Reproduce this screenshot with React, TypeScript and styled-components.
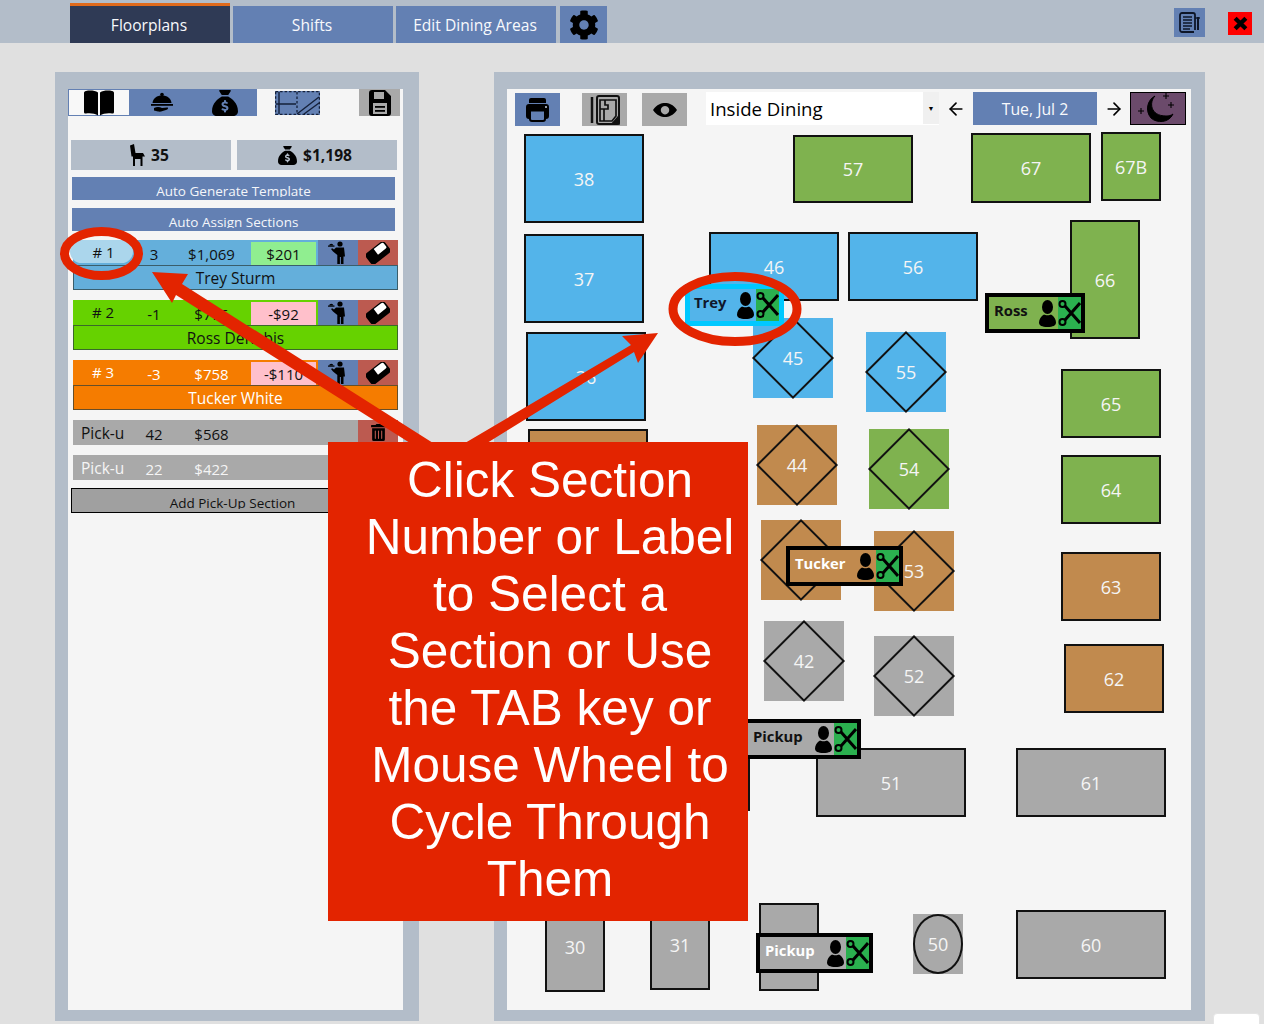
import React from "react";
import styled, { createGlobalStyle } from "styled-components";
import { ArrowLeft, ArrowRight } from "lucide-react";
import { FaSackDollar } from "react-icons/fa6";
import { FaCog as FaGear, FaTrashAlt as FaBin } from "react-icons/fa";

const FONT = `"Open Sans", "Noto Sans", sans-serif`;
const BLUE = "#6380b3";
const STEEL = "#b3bdc9";
const GRAY = "#a9a9a9";

const Global = createGlobalStyle`
  html, body { margin: 0; padding: 0; background: #e0e0e0; }
  body { font-family: ${FONT}; }
`;

const Page = styled.div`
  position: relative;
  width: 1264px;
  height: 1024px;
  overflow: hidden;
  background: #e0e0e0;
`;

const TopBar = styled.header`
  height: 43px;
  background: ${STEEL};
  display: flex;
  align-items: flex-end;
  padding: 0 12px 0 70px;
  box-sizing: border-box;
`;
const Tab = styled.div<{ $w: number; $active?: boolean }>`
  width: ${(p) => p.$w}px;
  height: ${(p) => (p.$active ? 40 : 37)}px;
  margin-right: 3px;
  padding-right: 2px;
  box-sizing: border-box;
  background: ${(p) => (p.$active ? "#2f3a55" : BLUE)};
  border-top: ${(p) => (p.$active ? "3px solid #e06a1c" : "none")};
  color: #f8f9fc;
  font-size: 15.6px;
  display: flex;
  align-items: center;
  justify-content: center;
`;
const GearTab = styled(Tab)`
  margin-left: 1px;
  padding-right: 0;
  color: #000;
  font-size: 30px;
`;
const TopRight = styled.div`
  margin-left: auto;
  align-self: stretch;
  display: flex;
  gap: 23px;
  align-items: flex-start;
`;
const NotesButton = styled.div`
  width: 31px;
  height: 29px;
  margin-top: 8px;
  background: ${BLUE};
  display: flex;
  align-items: center;
  justify-content: center;
`;
const CloseButton = styled.div`
  width: 24px;
  height: 23px;
  margin-top: 12px;
  background: #fe0000;
  display: flex;
  align-items: center;
  justify-content: center;
`;

const Main = styled.main`
  display: flex;
  gap: 75px;
  padding: 29px 0 0 55px;
`;
const Panel = styled.section<{ $w: number; $right: number }>`
  width: ${(p) => p.$w}px;
  height: 949px;
  box-sizing: border-box;
  background: #f5f5f5;
  border: solid ${STEEL};
  border-width: 17px ${(p) => p.$right}px 11px 13px;
`;

/* left panel */
const SideTools = styled.div`
  display: flex;
  height: 28px;
  align-items: flex-start;
`;
const SideTool = styled.div<{ $w: number; $bg?: string; $ml?: number; $selected?: boolean }>`
  width: ${(p) => p.$w}px;
  height: 27px;
  margin-left: ${(p) => p.$ml ?? 0}px;
  box-sizing: border-box;
  background: ${(p) => p.$bg ?? "transparent"};
  border: ${(p) => (p.$selected ? `1px solid ${BLUE}` : "none")};
  display: flex;
  align-items: center;
  justify-content: center;
`;
const SideBody = styled.div`
  padding: 23px 0 0 3px;
  display: flex;
  flex-direction: column;
`;
const Stats = styled.div`
  display: flex;
  gap: 6px;
  margin-bottom: 7px;
`;
const Stat = styled.div`
  width: 160px;
  height: 30px;
  padding-right: 4px;
  box-sizing: border-box;
  background: ${STEEL};
  display: flex;
  align-items: center;
  justify-content: center;
  gap: 6px;
  font-weight: 700;
  font-size: 15.6px;
  color: #111;
`;
const AutoButton = styled.div`
  width: 323px;
  height: 23px;
  margin: 0 0 8px 1px;
  background: ${BLUE};
  color: #f4f6fa;
  font-size: 13.5px;
  text-align: center;
`;
const ClippedLabel = styled.div`
  height: 20px;
  line-height: 29px;
  overflow: hidden;
`;
const SectionList = styled.div`
  padding-top: 1px;
`;
const Section = styled.div<{ $fg: string }>`
  width: 325px;
  margin: 0 0 10px 2px;
  color: ${(p) => p.$fg};
`;
const SectionRow = styled.div<{ $bg: string }>`
  height: 25px;
  display: grid;
  grid-template-columns: 60px 42px 73px 70px 40px 40px;
  background: ${(p) => p.$bg};
  font-size: 15px;
`;
const Cell = styled.div`
  display: flex;
  align-items: center;
  justify-content: center;
  padding-top: 2px;
`;
const NumberCell = styled.div<{ $selected?: boolean }>`
  display: flex;
  align-items: center;
  justify-content: center;
  font-size: 15px;
  ${(p) =>
    p.$selected
      ? `background:#abd6ec; border-radius:12px; margin:0 0 2px -3px; padding-left:4px;`
      : `padding-bottom:2px;`}
`;
const DiffCell = styled(Cell)<{ $bg: string }>`
  background: ${(p) => p.$bg};
  margin: 2px 2px 0 3px;
  color: #111;
  padding-top: 0;
`;
const ActionCell = styled.div<{ $bg: string }>`
  background: ${(p) => p.$bg};
  display: flex;
  align-items: center;
  justify-content: center;
  color: #000;
`;
const NameRow = styled.div<{ $bg: string }>`
  height: 25px;
  box-sizing: border-box;
  background: ${(p) => p.$bg};
  border: 1px solid rgba(40, 60, 60, 0.7);
  font-size: 15.5px;
  font-weight: 500;
  display: flex;
  align-items: center;
  justify-content: center;
`;
const PickRow = styled.div<{ $light?: boolean }>`
  width: 325px;
  height: 25px;
  margin: 0 0 10px 2px;
  background: ${GRAY};
  color: ${(p) => (p.$light ? "#f5f5f5" : "#111")};
  display: grid;
  grid-template-columns: 60px 42px 73px 110px 40px;
  font-size: 15px;
`;
const PickLabel = styled.div`
  padding-left: 8px;
  display: flex;
  align-items: center;
  font-size: 15.5px;
  overflow: hidden;
`;
const AddButton = styled.div`
  width: 323px;
  height: 25px;
  margin-top: -2px;
  box-sizing: border-box;
  border: 1px solid #000;
  background: #a0a0a0;
  color: #111;
  font-size: 13.5px;
  text-align: center;
`;

/* right panel */
const FloorTools = styled.div`
  display: flex;
  align-items: flex-start;
  height: 46px;
  padding: 3px 0 0 8px;
  box-sizing: border-box;
`;
const IconTool = styled.div<{ $bg: string; $ml: number }>`
  width: 45px;
  height: 33px;
  margin: 1px 0 0 ${(p) => p.$ml}px;
  background: ${(p) => p.$bg};
  display: flex;
  align-items: center;
  justify-content: center;
`;
const AreaSelect = styled.div`
  width: 233px;
  height: 33px;
  margin-left: 19px;
  background: #fff;
  display: flex;
  color: #000;
  font-size: 18.6px;
`;
const AreaText = styled.div`
  flex: 1;
  padding-left: 4px;
  line-height: 33px;
`;
const AreaCaret = styled.div`
  width: 16px;
  height: 32px;
  background: #f0f0f0;
  display: flex;
  align-items: center;
  justify-content: center;
  font-size: 7px;
`;
const NavArrow = styled.div<{ $w: number }>`
  width: ${(p) => p.$w}px;
  height: 33px;
  display: flex;
  align-items: center;
  justify-content: center;
  color: #000;
`;
const DateButton = styled.div`
  width: 124px;
  height: 33px;
  background: ${BLUE};
  color: #f8f9fc;
  font-size: 15.8px;
  display: flex;
  align-items: center;
  justify-content: center;
`;
const MoonButton = styled.div`
  width: 56px;
  height: 33px;
  box-sizing: border-box;
  background: #6b4a6b;
  border: 1px solid #000;
  display: flex;
  align-items: center;
  justify-content: center;
`;

const Canvas = styled.div`
  position: relative;
  height: 875px;
`;
const RectTable = styled.div<{ $x: number; $y: number; $w: number; $h: number; $c: string }>`
  position: absolute;
  left: ${(p) => p.$x - 507}px;
  top: ${(p) => p.$y - 135}px;
  width: ${(p) => p.$w}px;
  height: ${(p) => p.$h}px;
  box-sizing: border-box;
  background: ${(p) => p.$c};
  border: 2px solid #111;
  color: #f5f5f5;
  font-size: 18px;
  display: flex;
  align-items: center;
  justify-content: center;
`;
const SquareTable = styled(RectTable)`
  border: none;
  padding-bottom: 1px;
`;
const DiamondFrame = styled.div`
  position: absolute;
  left: 11px;
  top: 11px;
  width: 58px;
  height: 58px;
  box-sizing: border-box;
  border: 2px solid #111;
  transform: rotate(45deg);
`;
const EllipseFrame = styled.div`
  position: absolute;
  inset: 0;
  box-sizing: border-box;
  border: 2px solid #111;
  border-radius: 50%;
`;
const TableLabel = styled.span`
  position: relative;
`;
const Badge = styled.div<{ $x: number; $y: number; $w: number; $h: number; $b: number; $c: string; $frame: string; $fg: string }>`
  position: absolute;
  left: ${(p) => p.$x - 507}px;
  top: ${(p) => p.$y - 135}px;
  width: ${(p) => p.$w}px;
  height: ${(p) => p.$h}px;
  box-sizing: border-box;
  background: ${(p) => p.$c};
  border: ${(p) => p.$b}px solid ${(p) => p.$frame};
  color: ${(p) => p.$fg};
  display: flex;
  align-items: stretch;
  padding-left: ${(p) => 9 - p.$b}px;
  font-weight: 700;
  font-size: 14.8px;
`;
const BadgeName = styled.div`
  flex: 1;
  line-height: 26px;
`;
const BadgePerson = styled.div`
  width: 20px;
  margin-right: 1px;
  display: flex;
  align-items: center;
  justify-content: center;
  color: #000;
`;
const BadgeCut = styled.div`
  width: 23px;
  background: #2bb04f;
  display: flex;
  align-items: center;
  justify-content: center;
`;

const Callout = styled.div`
  position: absolute;
  left: 328px;
  top: 442px;
  width: 420px;
  height: 479px;
  box-sizing: border-box;
  padding: 9px 0 0 24px;
  background: #e32400;
  color: #fff;
  font-family: "Liberation Sans", Arial, sans-serif;
  font-size: 49.5px;
  line-height: 57px;
  text-align: center;
`;
const Marks = styled.svg`
  position: absolute;
  inset: 0;
  pointer-events: none;
`;
const Corner = styled.div`
  position: absolute;
  left: 1213px;
  top: 1013px;
  width: 45px;
  height: 20px;
  background: #fff;
  border: 1px solid #e4e4e4;
  border-radius: 4px;
`;

/* drawings */
const BookIcon = () => (
  <svg width="32" height="26" viewBox="0 0 32 26">
    <path d="M3 1c4-1 9-.5 12 1.500V25.500c-3-2-8-2.800-12-2-1.500.3-2-.5-2-1.500V3c0-1 .7-1.700 2-2z" />
    <path d="M29 1c-4-1-9-.5-12 1.500V25.500c3-2 8-2.800 12-2 1.500.3 2-.5 2-1.500V3c0-1-.7-1.700-2-2z" />
  </svg>
);
const ClocheIcon = () => (
  <svg width="26" height="24" viewBox="0 0 26 24">
    <circle cx="13" cy="3.500" r="1.800" />
    <path d="M3.500 12C4 7 8 4.500 13 4.500S22 7 22.500 12z" />
    <rect x="2" y="13" width="22" height="1.800" />
    <path d="M5 17c3-1.500 6-1 8 0l5-.5c2 0 1 2-1 2.500-3 1-5 2-8 1.500L5 19.500z" />
  </svg>
);
const BagIcon = ({ s = 26 }: { s?: number }) => <FaSackDollar size={s} color="#000" />;
const FloorIcon = () => (
  <svg width="45" height="24" viewBox="0 0 45 24">
    <rect x="0" y="0" width="45" height="24" fill={BLUE} />
    <g fill="none" stroke="#15203a" strokeWidth="1.300" strokeDasharray="2.500 2">
      <rect x="0.600" y="0.600" width="43.800" height="22.800" />
      <path d="M22 1v22" />
    </g>
    <g fill="none" stroke="#15203a" strokeWidth="1.400">
      <path d="M4 1v22M1 13h20" />
      <path d="M22 23L44 6M29 23L44 12" />
    </g>
  </svg>
);
const SaveIcon = () => (
  <svg width="22" height="26" viewBox="0 0 22 26">
    <path fillRule="evenodd" d="M3 0h13l6 6v17a3 3 0 0 1-3 3H3a3 3 0 0 1-3-3V3a3 3 0 0 1 3-3zM5 2v7h10V2zM4 13v11h14V13z" />
    <rect x="6" y="16" width="10" height="1.800" />
    <rect x="6" y="20" width="10" height="1.800" />
  </svg>
);
const PrintIcon = () => (
  <svg width="23" height="24" viewBox="0 0 23 24">
    <path d="M5 0h13a2 2 0 0 1 2 2v3H3V2a2 2 0 0 1 2-2z" />
    <path d="M3 6h17a3 3 0 0 1 3 3v9a3 3 0 0 1-3 3V12H3v9a3 3 0 0 1-3-3V9a3 3 0 0 1 3-3z" />
    <path d="M4 12.500h15V21a2 2 0 0 1-2 2H6a2 2 0 0 1-2-2z" fill={BLUE} stroke="#000" strokeWidth="2" />
    <circle cx="20" cy="9" r="1" fill="#c9d2e2" />
  </svg>
);
const PlanIcon = () => (
  <svg width="30" height="30" viewBox="0 0 30 30" fill="none" stroke="#111" strokeWidth="1.700">
    <path d="M2 2v26" strokeWidth="2.500" />
    <rect x="7" y="1" width="22" height="28" rx="2" strokeWidth="2" />
    <path d="M10 5h16v16l-4 5H10zM10 14h8v-4h-3v-5M14 14v12" />
    <path d="M22 29l7-8v8z" fill="#111" />
  </svg>
);
const EyeIcon = () => (
  <svg width="24" height="14" viewBox="0 0 24 14">
    <path fillRule="evenodd" d="M0 7C4 1.500 8 0 12 0s8 1.500 12 7c-4 5.500-8 7-12 7S4 12.500 0 7zm12-4a4.200 4.200 0 1 0 .01 0z" />
  </svg>
);
const NotesIcon = () => (
  <svg width="22" height="22" viewBox="0 0 22 22" fill="none" stroke="#0e1628">
    <path d="M15 20H3a2 2 0 0 1-2-2V3a2 2 0 0 1 2-2h11a2 2 0 0 1 2 2v15" strokeWidth="1.800" />
    <path d="M4 5h9M4 8h9M4 11h9M4 14h9M4 17h7" strokeWidth="1.500" />
    <path d="M19 5v13" strokeWidth="2" />
    <path d="M16 6h5" strokeWidth="1.400" />
  </svg>
);
const CrossIcon = () => (
  <svg width="15" height="15" viewBox="0 0 14 14">
    <path d="M2 2l10 10M12 2L2 12" stroke="#000" strokeWidth="4" />
  </svg>
);
const MoonIcon = () => (
  <svg width="46" height="31" viewBox="0 0 46 31" fill="none">
    <path d="M20 3C14 9 15 23 31 23c3 0 5-.5 7-2C34 30 22 30.500 16 25 10 18 12 7 20 3z" fill="#000" stroke="#000" />
    <path d="M3 18h6M6 15v6M28 3h6M31 0v6M33 12h6M36 9v6" stroke="#000" strokeWidth="1.100" />
  </svg>
);
const ChairIcon = () => (
  <svg width="16" height="22" viewBox="0 0 16 22">
    <path d="M1 1.500L5 0l1.500 9H14l2 3.500h-2.500V22h-2v-7H6v7H4V12.500H2.500z" />
  </svg>
);
const WaiterIcon = () => (
  <svg width="20" height="23" viewBox="0 0 20 23">
    <circle cx="12" cy="3" r="2.600" />
    <path d="M8 6.500h8l1 9h-1.500V23h-2.600v-7h-1v7H9.300v-9L5 10.500 3 8l1.200-.8L6 8.500z" />
    <rect x="0" y="4.500" width="6.500" height="1.200" />
    <path d="M1 4.500a2.300 2.300 0 0 1 4.500 0z" />
  </svg>
);
const EraserIcon = () => (
  <svg width="24" height="22" viewBox="0 0 24 22">
    <g transform="rotate(-38 12 11)">
      <rect x="0" y="4" width="24" height="14" rx="3.500" fill="#000" />
      <path d="M11 6h9.500a2 2 0 0 1 2 2v6a2 2 0 0 1-2 2H11z" fill="#fff" transform="translate(0 -1) scale(1 0.700) translate(0 3)" />
    </g>
  </svg>
);
const PersonIcon = () => (
  <svg width="17" height="27" viewBox="0 0 17 27">
    <ellipse cx="8.500" cy="7" rx="5.500" ry="7" />
    <path d="M5 14.500c1 1 6 1 7 0 3 1.500 5 5 5 8 0 3-3 4.500-8.500 4.500S0 25.500 0 22.500c0-3 2-6.500 5-8z" />
  </svg>
);
const ScissorsIcon = () => (
  <svg width="23" height="30" viewBox="0 0 23 30" fill="none" stroke="#000">
    <circle cx="4.500" cy="6" r="3" strokeWidth="2" />
    <circle cx="4.500" cy="24" r="3" strokeWidth="2" />
    <path d="M7 8L22 25M7 22L22 5" strokeWidth="3" />
  </svg>
);

type RT = [string, number, number, number, number, string];
const LB = "#53b4ea", LG = "#7fb24f", BR = "#c18a4e";
const rects: RT[] = [
  ["38", 524, 134, 120, 89, LB], ["37", 524, 234, 120, 89, LB], ["36", 526, 332, 120, 89, LB],
  ["", 528, 429, 120, 81, BR], ["46", 709, 232, 130, 69, LB], ["56", 848, 232, 130, 69, LB],
  ["57", 793, 135, 120, 68, LG], ["67", 971, 133, 120, 70, LG], ["67B", 1101, 132, 60, 69, LG],
  ["66", 1070, 220, 70, 119, LG], ["65", 1061, 369, 100, 69, LG], ["64", 1061, 455, 100, 69, LG],
  ["63", 1061, 552, 100, 69, BR], ["62", 1064, 644, 100, 69, BR], ["61", 1016, 748, 150, 69, GRAY],
  ["51", 816, 748, 150, 69, GRAY], ["60", 1016, 910, 150, 69, GRAY], ["", 600, 748, 150, 63, GRAY],
  ["30", 545, 902, 60, 90, GRAY], ["31", 650, 900, 60, 90, GRAY], ["", 759, 903, 60, 88, GRAY],
];
const diamonds: [string, number, number, string][] = [
  ["45", 753, 318, LB], ["55", 866, 332, LB], ["44", 757, 425, BR], ["54", 869, 429, LG],
  ["", 761, 520, BR], ["53", 874, 531, BR], ["42", 764, 621, GRAY], ["52", 874, 636, GRAY],
];
const badges: [string, number, number, number, number, number, string, string, string][] = [
  ["Trey", 685, 284, 99, 42, 5, LB, "#00c8ff", "#10182c"],
  ["Ross", 985, 293, 100, 40, 4, LG, "#000", "#111"],
  ["Tucker", 786, 546, 117, 40, 4, BR, "#000", "#fff"],
  ["Pickup", 744, 719, 117, 40, 4, GRAY, "#000", "#111"],
  ["Pickup", 756, 933, 117, 40, 4, GRAY, "#000", "#fff"],
];
const sections = [
  { n: "# 1", c: "3", amt: "$1,069", diff: "$201", dbg: "#90ee90", bg: "#64afdb", fg: "#111", name: "Trey Sturm", sel: true },
  { n: "# 2", c: "-1", amt: "$776", diff: "-$92", dbg: "#ffc0cb", bg: "#66d200", fg: "#111", name: "Ross DeRubis" },
  { n: "# 3", c: "-3", amt: "$758", diff: "-$110", dbg: "#ffc0cb", bg: "#f57c00", fg: "#fff", name: "Tucker White" },
];
const lines = ["Click Section", "Number or Label", "to Select a", "Section or Use", "the TAB key or", "Mouse Wheel to", "Cycle Through", "Them"];

export default function App() {
  return (
    <Page>
      <Global />
      <TopBar>
        <Tab $w={160} $active>Floorplans</Tab>
        <Tab $w={160}>Shifts</Tab>
        <Tab $w={160}>Edit Dining Areas</Tab>
        <GearTab $w={47}><FaGear /></GearTab>
        <TopRight>
          <NotesButton><NotesIcon /></NotesButton>
          <CloseButton><CrossIcon /></CloseButton>
        </TopRight>
      </TopBar>
      <Main>
        <Panel $w={364} $right={16}>
          <SideTools>
            <SideTool $w={62} $selected $bg="#f8f8f8"><BookIcon /></SideTool>
            <SideTool $w={63} $bg={BLUE}><ClocheIcon /></SideTool>
            <SideTool $w={64} $bg={BLUE}><BagIcon /></SideTool>
            <SideTool $w={45} $ml={18}><FloorIcon /></SideTool>
            <SideTool $w={41} $ml={39} $bg={GRAY}><SaveIcon /></SideTool>
          </SideTools>
          <SideBody>
            <Stats>
              <Stat><ChairIcon />35</Stat>
              <Stat><BagIcon s={19} />$1,198</Stat>
            </Stats>
            <AutoButton><ClippedLabel>Auto Generate Template</ClippedLabel></AutoButton>
            <AutoButton><ClippedLabel>Auto Assign Sections</ClippedLabel></AutoButton>
            <SectionList>
              {sections.map((s) => (
                <Section key={s.n} $fg={s.fg}>
                  <SectionRow $bg={s.bg}>
                    <NumberCell $selected={s.sel}>{s.n}</NumberCell>
                    <Cell>{s.c}</Cell>
                    <Cell>{s.amt}</Cell>
                    <DiffCell $bg={s.dbg}>{s.diff}</DiffCell>
                    <ActionCell $bg={BLUE}><WaiterIcon /></ActionCell>
                    <ActionCell $bg="#bc5a50"><EraserIcon /></ActionCell>
                  </SectionRow>
                  <NameRow $bg={s.bg}>{s.name}</NameRow>
                </Section>
              ))}
            </SectionList>
            <PickRow>
              <PickLabel>Pick-u</PickLabel>
              <Cell>42</Cell>
              <Cell>$568</Cell>
              <span />
              <ActionCell $bg="#bc5a50"><FaBin size={17} /></ActionCell>
            </PickRow>
            <PickRow $light>
              <PickLabel>Pick-u</PickLabel>
              <Cell>22</Cell>
              <Cell>$422</Cell>
            </PickRow>
            <AddButton><ClippedLabel>Add Pick-Up Section</ClippedLabel></AddButton>
          </SideBody>
        </Panel>
        <Panel $w={711} $right={14}>
          <FloorTools>
            <IconTool $bg={BLUE} $ml={0}><PrintIcon /></IconTool>
            <IconTool $bg={GRAY} $ml={22}><PlanIcon /></IconTool>
            <IconTool $bg={GRAY} $ml={15}><EyeIcon /></IconTool>
            <AreaSelect>
              <AreaText>Inside Dining</AreaText>
              <AreaCaret>▼</AreaCaret>
            </AreaSelect>
            <NavArrow $w={34}><ArrowLeft size={20} strokeWidth={2} /></NavArrow>
            <DateButton>Tue, Jul 2</DateButton>
            <NavArrow $w={33}><ArrowRight size={20} strokeWidth={2} /></NavArrow>
            <MoonButton><MoonIcon /></MoonButton>
          </FloorTools>
          <Canvas>
            {rects.map(([l, x, y, w, h, c], i) => (
              <RectTable key={i} $x={x} $y={y} $w={w} $h={h} $c={c}>{l}</RectTable>
            ))}
            {diamonds.map(([l, x, y, c]) => (
              <SquareTable key={x} $x={x} $y={y} $w={80} $h={80} $c={c}>
                <DiamondFrame />
                {l && <TableLabel>{l}</TableLabel>}
              </SquareTable>
            ))}
            <SquareTable $x={913} $y={914} $w={50} $h={60} $c={GRAY}>
              <EllipseFrame />
              <TableLabel>50</TableLabel>
            </SquareTable>
            {badges.map(([l, x, y, w, h, b, c, f, fg]) => (
              <Badge key={l + y} $x={x} $y={y} $w={w} $h={h} $b={b} $c={c} $frame={f} $fg={fg}>
                <BadgeName>{l}</BadgeName>
                <BadgePerson><PersonIcon /></BadgePerson>
                <BadgeCut><ScissorsIcon /></BadgeCut>
              </Badge>
            ))}
          </Canvas>
        </Panel>
      </Main>
      <Corner />
      <Marks width="1264" height="1024" viewBox="0 0 1264 1024">
        <g fill="#e32400">
          <path d="M152 272L188 274 182 284 433 443 410 443 176 295 172 303z" />
          <path d="M658 333L622 336 631 345 465 443 487 443 634 352 638 363z" />
        </g>
        <g fill="none" stroke="#e32400" strokeWidth="9">
          <ellipse cx="101.500" cy="253.500" rx="37" ry="22" />
          <ellipse cx="735" cy="309" rx="62" ry="32.500" />
        </g>
      </Marks>
      <Callout>
        {lines.map((l) => (
          <div key={l}>{l}</div>
        ))}
      </Callout>
    </Page>
  );
}
